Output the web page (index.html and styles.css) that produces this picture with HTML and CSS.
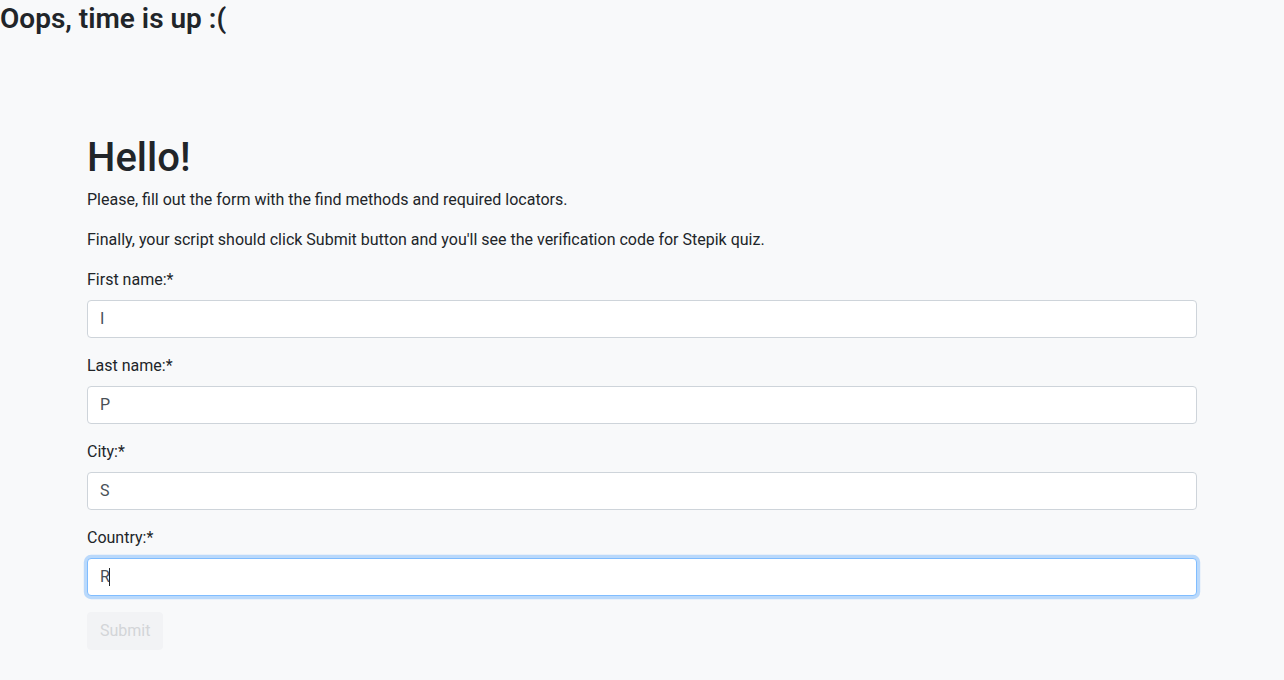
FILE: index.html
```html
<!DOCTYPE html>
<html lang="en">
<head>
<meta charset="utf-8">
<title>Registration</title>
<link rel="stylesheet" href="styles.css">
</head>
<body>
<h3 class="timeout">Oops, time is up :(</h3>
<div class="container">
  <h1 class="title">Hello!</h1>
  <p class="lead-text">Please, fill out the form with the find methods and required locators.</p>
  <p class="lead-text">Finally, your script should click Submit button and you'll see the verification code for Stepik quiz.</p>
  <form class="form">
    <div class="form-group">
      <label class="label">First name:*</label>
      <input class="form-control" type="text" value="I">
    </div>
    <div class="form-group">
      <label class="label">Last name:*</label>
      <input class="form-control" type="text" value="P">
    </div>
    <div class="form-group">
      <label class="label">City:*</label>
      <input class="form-control" type="text" value="S">
    </div>
    <div class="form-group">
      <label class="label">Country:*</label>
      <div class="field-wrap">
        <input class="form-control is-focused" type="text" value="R">
        <span class="caret"></span>
      </div>
    </div>
    <button class="btn-submit" type="button" disabled>Submit</button>
  </form>
</div>
</body>
</html>
```
FILE: styles.css
```css
* { box-sizing: border-box; }
html, body { margin: 0; padding: 0; }
body {
  background: #f8f9fa;
  color: #212529;
  font-family: Roboto, "Liberation Sans", sans-serif;
  font-size: 16px;
  line-height: 1.5;
  height: 680px;
  overflow: hidden;
}
.timeout {
  margin: 0;
  padding-top: 2px;
  font-size: 28px;
  font-weight: 600;
  line-height: 1.2;
}
.container {
  max-width: 1140px;
  margin: 98px auto 0;
  padding: 0 15px;
}
.title {
  font-size: 40px;
  font-weight: 500;
  line-height: 1.2;
  margin: 0 0 6px;
}
.lead-text {
  margin: 0 0 16px;
}
.form-group {
  margin-bottom: 16px;
}
.label {
  display: inline-block;
  margin-bottom: 8px;
}
.form-control {
  display: block;
  width: 100%;
  height: 38px;
  padding: 6px 12px;
  font: inherit;
  color: #495057;
  background: #fff;
  border: 1px solid #ced4da;
  border-radius: 4px;
  outline: none;
}
.field-wrap { position: relative; }
.is-focused {
  border-color: #80bdff;
  box-shadow: 0 0 0 3.2px rgba(0, 123, 255, .25);
}
.caret {
  position: absolute;
  left: 22px;
  top: 10px;
  width: 1px;
  height: 18px;
  background: #212529;
}
.btn-submit {
  font: inherit;
  line-height: 1.5;
  color: #d3d5d8;
  background: #f2f3f5;
  border: 1px solid #f2f3f5;
  border-radius: 4px;
  padding: 6px 12px;
}
```
